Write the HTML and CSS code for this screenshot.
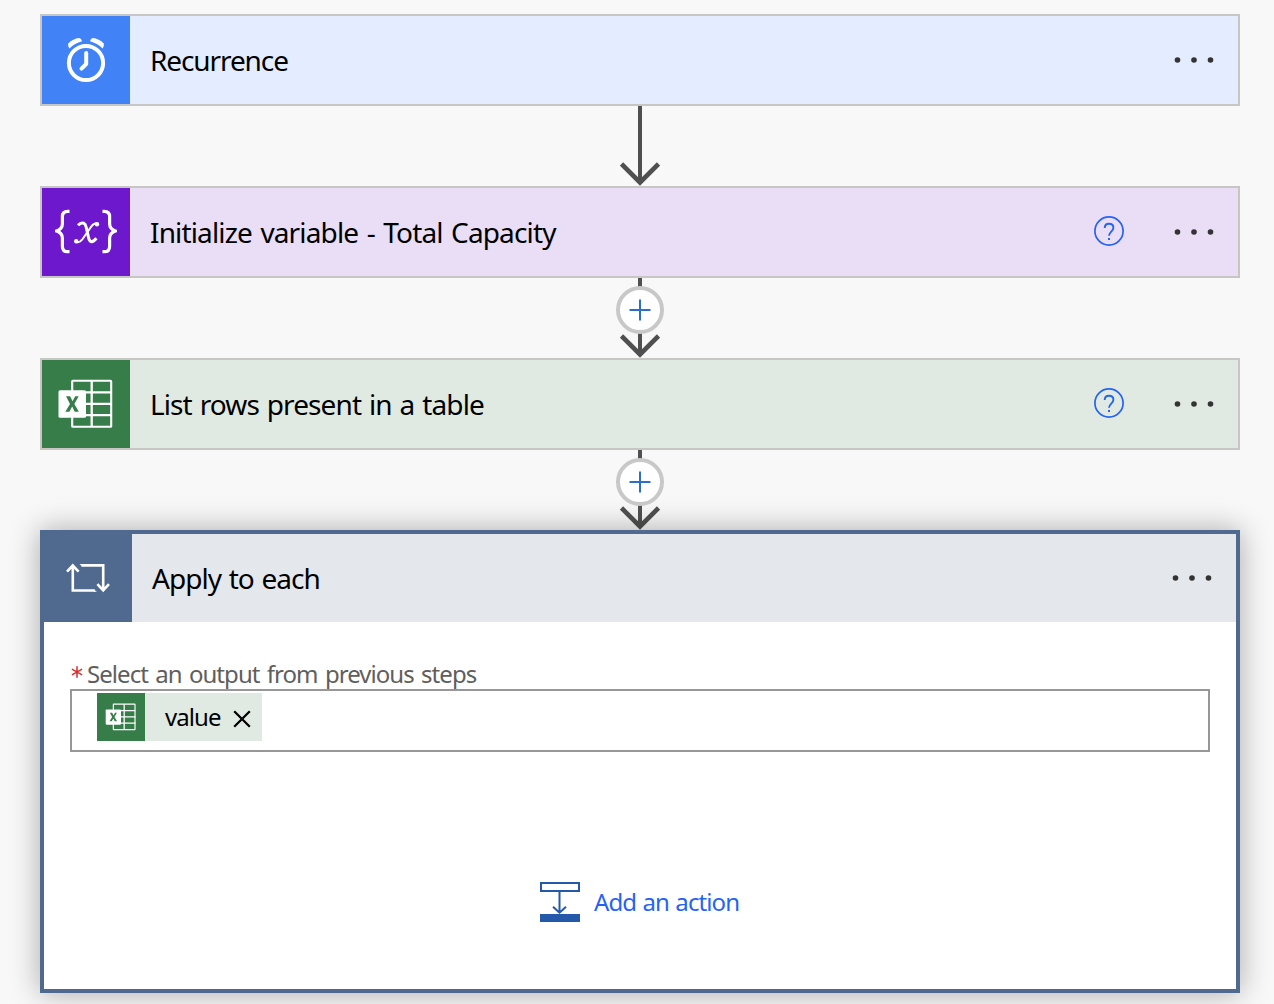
FILE: index.html
```html
<!DOCTYPE html>
<html lang="en">
<head>
<meta charset="utf-8">
<title>Flow designer</title>
<link rel="stylesheet" href="styles.css">
</head>
<body>
<svg class="defs" width="0" height="0">
  <symbol id="excel" viewBox="0 0 54 50">
    <rect x="13.2" y="1.8" width="39" height="46" rx=".6" fill="none" stroke="#fff" stroke-width="2.1"/>
    <path d="M32.7 2v46M14 13.4h39M14 24.8h39M14 36.2h39" fill="none" stroke="#fff" stroke-width="2.3"/>
    <rect x="15" y="12" width="11" height="25" fill="#377d4a"/>
    <rect x="-.5" y="11.3" width="27.5" height="27.5" rx="1.5" fill="#fff"/>
    <path d="M7 17.2h4.1l2.500 5 2.600-5h3.500l-4.400 7.700 4.600 7.800h-4.200l-2.500-5.200-2.800 5.200H6.300l4.700-7.800z" fill="#377d4a"/>
  </symbol>
  <symbol id="arrow" viewBox="0 0 40 80">
    <path d="M20 0v77" fill="none" stroke="#505050" stroke-width="4"/>
    <path d="M1.5 58l18.500 18.500L38.500 58" fill="none" stroke="#505050" stroke-width="4.600"/>
  </symbol>
  <symbol id="dots" viewBox="0 0 40 8">
    <g fill="#333"><circle cx="3.5" cy="4" r="2.8"/><circle cx="20" cy="4" r="2.8"/><circle cx="36.5" cy="4" r="2.8"/></g>
  </symbol>
  <symbol id="help" viewBox="0 0 30 30">
    <circle cx="15" cy="15" r="14.1" fill="none" stroke="#2563f5" stroke-width="1.7"/>
    <path d="M10.7 12c0-2.8 1.8-4.3 4.3-4.3s4.4 1.6 4.4 4c0 3.6-4.4 4.2-4.4 8.1" fill="none" stroke="#2563f5" stroke-width="1.9"/>
    <path d="M14 22h2v2.1h-2z" fill="#2563f5"/>
  </symbol>
</svg>
<main class="flow">
  <section class="card card-blue">
    <div class="tile">
      <svg width="40" height="46" viewBox="0 0 40 46" fill="none" stroke="#fff">
        <circle cx="20" cy="26" r="17.1" stroke-width="4"/>
        <path d="M20.2 16v11l-4.7 4.6" stroke-width="4" stroke-linecap="round" stroke-linejoin="round"/>
        <path d="M2.200 6.500Q7 1.600 13.200 1Q15.400 1.400 16 4.200Q8.800 6 3.400 11.400Q1.600 9 2.200 6.500zM37.800 6.500Q33 1.600 26.800 1Q24.600 1.400 24 4.200Q31.200 6 36.600 11.400Q38.400 9 37.800 6.500z" fill="#fff" stroke="none"/>
      </svg>
    </div>
    <h2 class="title t1">Recurrence</h2>
    <svg class="dots" width="40" height="8"><use href="#dots"/></svg>
  </section>

  <div class="link"><svg width="40" height="80"><use href="#arrow"/></svg></div>

  <section class="card card-purple">
    <div class="tile">
      <svg width="62" height="46" viewBox="0 0 62 46" fill="none" stroke="#fff">
        <path d="M14.500 2.400h-1.800q-5.300 0-5.300 5.200v7.200q0 5.400-5.900 7.200 5.900 1.800 5.900 7.200v8.200q0 5.200 5.300 5.200h1.800M47.500 2.400h1.800q5.300 0 5.300 5.200v7.200q0 5.400 5.900 7.200-5.900 1.800-5.900 7.200v8.200q0 5.200-5.300 5.200h-1.800" stroke-width="3.200"/>
        <path d="M23 16.200q3-3 5.600-2 1.900.8 2.600 4l2.200 9.800q.9 4.500 3 4.700 2.200.1 5-3.400" stroke-width="3"/>
        <path d="M43 14.600q-3.600-1.200-6.800 3L27.600 30q-2.800 3.800-6.200 3" stroke-width="2"/>
        <g fill="#fff" stroke="none"><circle cx="42" cy="15.300" r="2.200"/><circle cx="21.200" cy="32.200" r="2.200"/></g>
      </svg>
    </div>
    <h2 class="title t2">Initialize variable - Total Capacity</h2>
    <svg class="help" width="30" height="30"><use href="#help"/></svg>
    <svg class="dots" width="40" height="8"><use href="#dots"/></svg>
  </section>

  <div class="link">
    <svg width="40" height="80"><use href="#arrow"/></svg>
    <span class="plus"><svg width="22" height="22"><path d="M11 .5v21M.5 11h21" stroke="#2a6fca" stroke-width="2"/></svg></span>
  </div>

  <section class="card card-green">
    <div class="tile"><svg class="excel" width="54" height="50"><use href="#excel"/></svg></div>
    <h2 class="title t3">List rows present in a table</h2>
    <svg class="help" width="30" height="30"><use href="#help"/></svg>
    <svg class="dots" width="40" height="8"><use href="#dots"/></svg>
  </section>

  <div class="link">
    <svg width="40" height="80"><use href="#arrow"/></svg>
    <span class="plus"><svg width="22" height="22"><path d="M11 .5v21M.5 11h21" stroke="#2a6fca" stroke-width="2"/></svg></span>
  </div>

  <section class="loop">
    <header class="loop-head">
      <div class="tile">
        <svg width="44" height="30" viewBox="0 0 44 30" fill="none" stroke="#fff" stroke-width="2.6">
          <path d="M6.800 3v24.500h22M1 8.600l5.800-6.100 5.800 6.100"/>
          <path d="M15.500 2.400h21.700v24M31.400 21.200l5.800 6.100 5.800-6.100"/>
          <path d="M13.500 1.100h3v2.600zM27.500 26.200l3.500 2.600h-3.500z" fill="#fff" stroke="none"/>
        </svg>
      </div>
      <h2 class="title t4">Apply to each</h2>
      <svg class="dots" width="40" height="8"><use href="#dots"/></svg>
    </header>
    <div class="loop-body">
      <div class="label"><svg class="star" width="12" height="12" viewBox="0 0 12 12"><path d="M6 .3v11.4M.9 3.2l10.2 5.6M11.1 3.2L.9 8.8" stroke="#d92c2c" stroke-width="1.5"/></svg><span class="label-text">Select an output from previous steps</span></div>
      <div class="field">
        <div class="token">
          <span class="token-icon"><svg class="excel" width="30" height="28"><use href="#excel"/></svg></span>
          <span class="token-text">value</span>
          <svg width="18" height="18" viewBox="0 0 18 18"><path d="M1.2 1.2l15.6 15.6M16.8 1.2L1.2 16.8" stroke="#000" stroke-width="2.3"/></svg>
        </div>
      </div>
      <a class="add">
        <svg width="40" height="40" viewBox="0 0 40 40" fill="none" stroke="#2458a9" stroke-width="2">
          <rect x="1" y="1" width="38" height="8"/>
          <path d="M19.500 10v20M13 24.700l6.500 6 6.500-6"/>
          <path d="M0 32h40v8H0z" fill="#2458a9" stroke="none"/>
        </svg>
        <span class="add-text">Add an action</span>
      </a>
    </div>
  </section>
</main>
</body>
</html>
```
FILE: styles.css
```css
* { box-sizing: border-box; }
body {
  margin: 0;
  height: 1004px;
  overflow: hidden;
  background: #f8f8f8;
  font-family: "Noto Sans", sans-serif;
  color: #000;
}
svg { display: block; flex: none; }
.defs { position: absolute; }
.excel, #excel { overflow: visible; }
.flow { width: 1200px; margin-left: 40px; padding-top: 14px; }
.card {
  display: flex;
  align-items: center;
  height: 92px;
  border: 2px solid #c8c6c4;
  padding-right: 24px;
}
.tile {
  width: 88px;
  height: 88px;
  flex: none;
  display: flex;
  align-items: center;
  justify-content: center;
}
.card-blue { background: #e3edff; }
.card-blue .tile { background: #4183f7; }
.card-purple { background: #eaddf6; }
.card-purple .tile { background: #6d18cc; }
.card-green { background: #e1eae2; }
.card-green .tile { background: #377d4a; }
.title {
  flex: 1;
  margin: 0 0 0 20px;
  font-size: 28px;
  line-height: 40px;
  font-weight: 400;
  white-space: nowrap;
}
.t1 { letter-spacing: -1.1px; }
.t2 { letter-spacing: -0.85px; word-spacing: 2px; }
.t3 { letter-spacing: -0.9px; word-spacing: 1.5px; }
.t4 { letter-spacing: -0.95px; word-spacing: 1.3px; }
.help { margin: 0 50px 2px 0; }
.link {
  position: relative;
  display: flex;
  justify-content: center;
  height: 80px;
}
.plus {
  position: absolute;
  z-index: 2;
  top: 8px;
  left: 576px;
  width: 48px;
  height: 48px;
  border: 4px solid #c8c8c8;
  border-radius: 50%;
  background: #fff;
  display: flex;
  align-items: center;
  justify-content: center;
}
.loop {
  position: relative;
  z-index: 1;
  height: 463px;
  border: 4px solid #50698f;
  background: #fff;
  box-shadow: 0 0 28px rgba(0, 0, 0, .32);
}
.loop-head {
  display: flex;
  align-items: center;
  height: 88px;
  padding-right: 24px;
  background: #e4e7ec;
}
.loop-head .tile { background: #50698f; }
.loop-body { padding: 36px 26px 0; display: flex; flex-direction: column; }
.label {
  display: flex;
  align-items: center;
  height: 31px;
  gap: 4px;
  color: #605e5c;
  font-size: 24px;
  line-height: 31px;
  white-space: nowrap;
}
.star { margin: 0 0 4px 1px; }
.label-text { letter-spacing: -0.95px; word-spacing: 2px; }
.field {
  height: 63px;
  border: 2px solid #979797;
  padding: 2px 25px;
}
.token {
  display: flex;
  align-items: center;
  width: 165px;
  height: 48px;
  background: #e1eae2;
}
.token-icon {
  width: 48px;
  height: 48px;
  background: #377d4a;
  display: flex;
  align-items: center;
  justify-content: center;
}
.token-text {
  width: 68px;
  margin-left: 20px;
  font-size: 24px;
  line-height: 48px;
  letter-spacing: -0.95px;
}
.token svg { margin-top: 3px; }
.token-icon svg { margin-top: 0; }
.add {
  display: flex;
  align-items: center;
  gap: 14px;
  height: 40px;
  margin: 130px 0 0 470px;
  color: #2563f5;
  font-size: 24px;
  white-space: nowrap;
}
.add-text { letter-spacing: -0.9px; word-spacing: 1px; line-height: 40px; }
```
